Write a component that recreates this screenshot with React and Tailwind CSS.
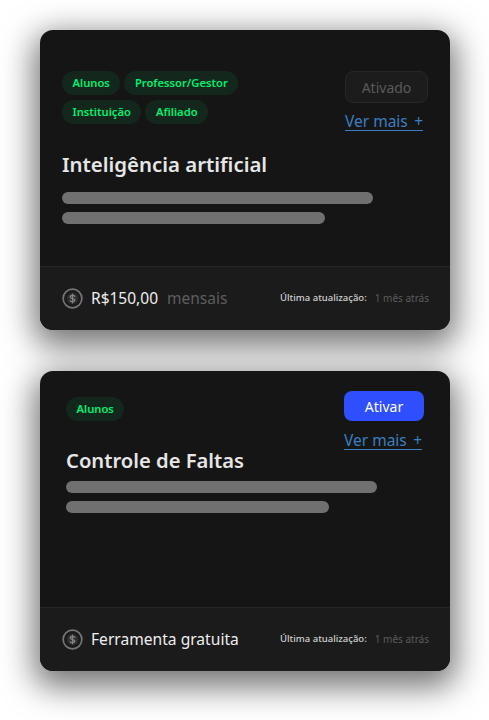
const FONT = "font-['Noto_Sans','Liberation_Sans',sans-serif]";

function Tag({ children }) {
  return (
    <span className="block h-6 px-[10.5px] rounded-full bg-[#14271d] text-[11.2px] leading-6 font-semibold text-[#00f070] whitespace-nowrap">
      {children}
    </span>
  );
}

function VerMais() {
  return (
    <a className="flex justify-between w-[78px] border-b border-[#3b7fc0] text-[15.5px] leading-[17px] text-[#3b7fc0]">
      <span>Ver mais</span>
      <span>+</span>
    </a>
  );
}

function Bars() {
  return (
    <div className="flex flex-col gap-[8px]">
      <div className="w-[311px] h-3 rounded-full bg-[#707070]" />
      <div className="w-[263px] h-3 rounded-full bg-[#707070]" />
    </div>
  );
}

function CoinIcon() {
  return (
    <svg width="21" height="21" viewBox="0 0 22 22" fill="none" className="shrink-0">
      <circle cx="11" cy="11" r="9.8" stroke="#757575" strokeWidth="1.8" />
      <circle cx="11" cy="11" r="6" fill="#2f2f2f" />
      <path
        d="M13.4 8.8c-.4-.7-1.3-1.1-2.4-1.1-1.4 0-2.4.7-2.4 1.7 0 2.3 4.8 1 4.8 3.3 0 1-1 1.7-2.4 1.7-1.1 0-2-.4-2.4-1.1M11 6.5v9"
        stroke="#858585"
        strokeWidth="1.3"
        strokeLinecap="round"
      />
    </svg>
  );
}

function Footer({ children }) {
  return (
    <div className="h-[64px] shrink-0 bg-[#1b1b1b] border-t border-[#252525] pl-[22px] pr-[21px] flex items-center justify-between">
      <div className="flex items-center gap-[8px]">
        <CoinIcon />
        {children}
      </div>
      <div className="flex items-center gap-[8px] whitespace-nowrap">
        <span className="text-[9.5px] font-medium text-[#d0d0d0]">Última atualização:</span>
        <span className="text-[10px] text-[#5c5c5c]">1 mês atrás</span>
      </div>
    </div>
  );
}

export default function App() {
  return (
    <div className={`${FONT} w-[489px] h-[720px] overflow-hidden bg-white flex flex-col items-center pt-[30px] pl-[1px] gap-[41px]`}>
      {/* Card 1 */}
      <div className="w-[410px] h-[300px] rounded-[13px] overflow-hidden flex flex-col bg-[#151515] shadow-[0_10px_32px_6px_rgba(0,0,0,0.55)]">
        <div className="flex-1 pt-[41px] pl-[22px] pr-[22px]">
          <div className="flex justify-between">
            <div className="w-[200px] flex flex-wrap content-start gap-x-[4px] gap-y-[5px]">
              <Tag>Alunos</Tag>
              <Tag>Professor/Gestor</Tag>
              <Tag>Instituição</Tag>
              <Tag>Afiliado</Tag>
            </div>
            <div className="flex flex-col items-start gap-[10px]">
              <button className="w-[83px] h-[32px] rounded-[8px] bg-[#1c1c1c] border border-[#272727] text-[14px] text-[#5a5a5a]">
                Ativado
              </button>
              <VerMais />
            </div>
          </div>
          <h2 className="mt-[19px] text-[20.4px] leading-[28px] font-semibold text-[#e6e6e6]">
            Inteligência artificial
          </h2>
          <div className="mt-[14px]">
            <Bars />
          </div>
        </div>
        <Footer>
          <span className="text-[15.5px] text-[#eeeeee] whitespace-nowrap">R$150,00</span>
          <span className="ml-[1px] text-[15.5px] text-[#5e5e5e]">mensais</span>
        </Footer>
      </div>

      {/* Card 2 */}
      <div className="w-[410px] h-[300px] rounded-[13px] overflow-hidden flex flex-col bg-[#151515] shadow-[0_10px_32px_6px_rgba(0,0,0,0.55)]">
        <div className="flex-1 pt-[20px] pl-[26px] pr-[26px]">
          <div className="flex justify-between">
            <div className="pt-[6px]">
              <Tag>Alunos</Tag>
            </div>
            <div className="flex flex-col items-start gap-[11px]">
              <button className="w-[80px] h-[30px] rounded-[8px] bg-[#2f4fff] text-[14px] text-white">
                Ativar
              </button>
              <VerMais />
            </div>
          </div>
          <h2 className="-mt-[4px] text-[20.2px] leading-[28px] font-semibold text-[#e6e6e6]">
            Controle de Faltas
          </h2>
          <div className="mt-[7px]">
            <Bars />
          </div>
        </div>
        <Footer>
          <span className="text-[15.6px] text-[#eeeeee] whitespace-nowrap">Ferramenta gratuita</span>
        </Footer>
      </div>
    </div>
  );
}
